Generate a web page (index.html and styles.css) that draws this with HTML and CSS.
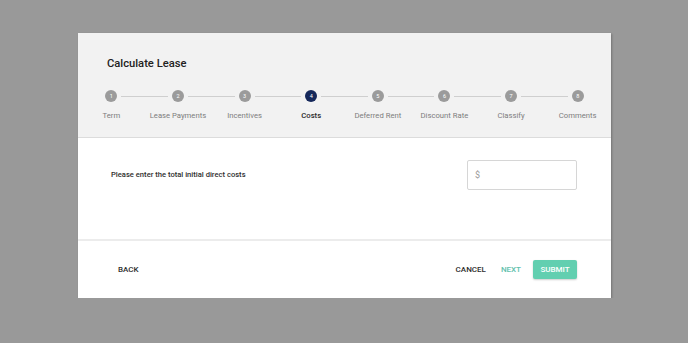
FILE: index.html
```html
<!DOCTYPE html>
<html>
<head>
<meta charset="utf-8">
<link rel="stylesheet" href="styles.css">
</head>
<body>
<div class="dialog">
  <div class="header">
    <h1 class="title">Calculate Lease</h1>
    <ol class="stepper">
      <li class="step"><span class="dot">1</span><span class="label">Term</span></li>
      <li class="step"><span class="dot">2</span><span class="label">Lease Payments</span></li>
      <li class="step"><span class="dot">3</span><span class="label">Incentives</span></li>
      <li class="step active"><span class="dot">4</span><span class="label">Costs</span></li>
      <li class="step"><span class="dot">5</span><span class="label">Deferred Rent</span></li>
      <li class="step"><span class="dot">6</span><span class="label">Discount Rate</span></li>
      <li class="step"><span class="dot">7</span><span class="label">Classify</span></li>
      <li class="step last"><span class="dot">8</span><span class="label">Comments</span></li>
    </ol>
  </div>
  <div class="content">
    <p class="question">Please enter the total initial direct costs</p>
    <div class="field"><span class="prefix">$</span></div>
  </div>
  <div class="footer">
    <button class="btn">BACK</button>
    <div class="actions">
      <button class="btn">CANCEL</button>
      <button class="btn btn-next">NEXT</button>
      <button class="btn btn-submit">SUBMIT</button>
    </div>
  </div>
</div>
</body>
</html>
```
FILE: styles.css
```css
html, body {
  margin: 0;
  padding: 0;
  background: #999999;
  font-family: Roboto, "Liberation Sans", sans-serif;
}
body {
  padding: 33px 0 0 78px;
}
.dialog {
  width: 533px;
  background: #ffffff;
  box-shadow: 1px 1px 2px rgba(0,0,0,0.25);
}
.header {
  background: #f2f2f2;
  padding: 23px 0 15px;
  border-bottom: 1px solid #dcdcdc;
}
.title {
  margin: 0 0 0 29px;
  font-size: 11.2px;
  line-height: 16px;
  font-weight: 500;
  color: #222;
}
.stepper {
  list-style: none;
  margin: 18px 0 0;
  padding: 0;
  display: grid;
  grid-template-columns: repeat(8, 1fr);
}
.step {
  position: relative;
  display: flex;
  flex-direction: column;
  align-items: center;
}
.step::after {
  content: "";
  position: absolute;
  top: 6px;
  left: calc(50% + 10px);
  right: calc(-50% + 10px);
  height: 1px;
  background: #cfcfcf;
}
.step.last::after { display: none; }
.dot {
  width: 12px;
  height: 12px;
  border-radius: 50%;
  background: #9b9b9b;
  color: #fff;
  font-size: 5.5px;
  line-height: 12px;
  text-align: center;
}
.label {
  margin-top: 8px;
  font-size: 7.7px;
  line-height: 12px;
  color: #7d7d7d;
  white-space: nowrap;
}
.step.active .dot { background: #15285a; }
.step.active .label { color: #2a2a2a; font-weight: 500; }

.content {
  height: 103px;
  box-sizing: border-box;
  padding: 22px 34px 0 33px;
  display: flex;
  align-items: flex-start;
  justify-content: space-between;
  border-bottom: 2px solid #ececec;
}
.question {
  margin: 0;
  line-height: 30px;
  font-size: 7.6px;
  font-weight: 500;
  color: #2e2e2e;
}
.field {
  width: 101px;
  height: 28px;
  border: 1px solid #d6d6d6;
  border-radius: 2px;
  display: flex;
  align-items: center;
  padding-left: 7px;
  box-sizing: content-box;
}
.prefix {
  font-size: 9px;
  color: #9a9a9a;
}
.footer {
  height: 57px;
  display: flex;
  align-items: center;
  justify-content: space-between;
  padding: 0 34px 0 40px;
}
.actions {
  display: flex;
  align-items: center;
}
.btn {
  border: 0;
  background: transparent;
  padding: 0;
  font-family: inherit;
  font-size: 8px;
  font-weight: 500;
  color: #2e2e2e;
  cursor: pointer;
}
.btn-next {
  margin-left: 15px;
  color: #62c1ad;
}
.btn-submit {
  margin-left: 12px;
  width: 44px;
  height: 19px;
  border-radius: 2px;
  background: #62cfb0;
  color: #fff;
  box-shadow: 0 1px 2px rgba(0,0,0,0.2);
}
```
